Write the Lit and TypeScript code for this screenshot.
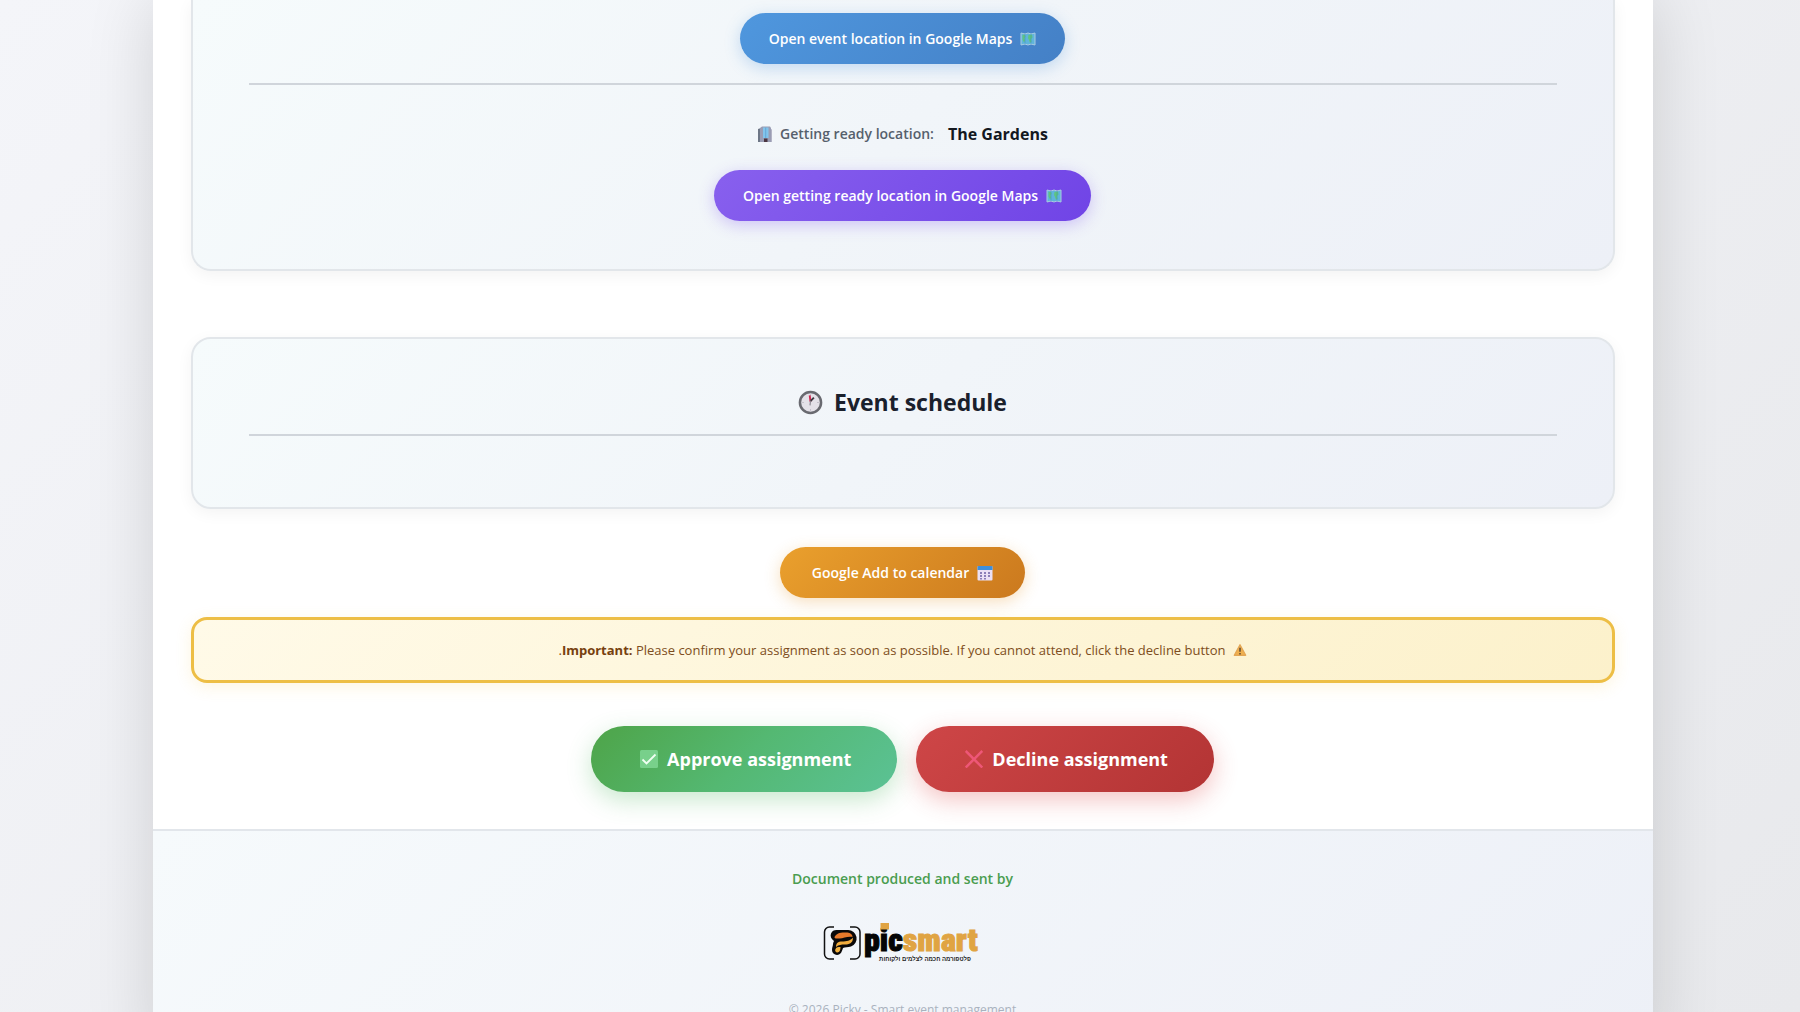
import { LitElement, html, css, svg } from "lit";
import { customElement } from "lit/decorators.js";

const mapIcon = html`<svg class="icon" viewBox="0 0 16 16" aria-hidden="true">
  <path d="M1 2l4 1 3-1 3 1 4-1v12l-4-1-3 1-3-1-4 1z" fill="#5fb4dc" stroke="#a9cbe0" stroke-width="1" />
  <path d="M2.500 4l2-.5 1 2-1 2 .5 2-1 2-1.500-3zM8.500 4l3.500-.5.5 3-1.500 1.500.5 2.500-1.500 1.500-1-3L8 7z" fill="#5fc480" />
  <path d="M5 3v10M11 3v10" stroke="#3f8fb5" stroke-width="0.500" fill="none" />
</svg>`;

const buildingIcon = html`<svg class="icon" viewBox="0 0 16 16" aria-hidden="true">
  <path d="M1 3l3-1v14H1z" fill="#6d7686" />
  <path d="M12 2l3 1.500V16h-3z" fill="#b3b4c6" />
  <path d="M3 2l2-1.500h8L14 2v14H3z" fill="#9a9db4" />
  <path d="M6 1.500h5.500V12H6z" fill="#82c4ec" />
  <path d="M8.700 1.500V12" stroke="#5d9fd0" stroke-width="0.800" />
  <path d="M7 12.500h3.500V16H7z" fill="#4a3540" />
</svg>`;

const clockIcon = html`<svg class="icon clock" viewBox="0 0 26 26" aria-hidden="true">
  <circle cx="13" cy="13" r="11" fill="#e4e1e8" stroke="#696a70" stroke-width="2.600" />
  <path d="M13 4.500v1.500M13 20v1.500M4.500 13H6M20 13h1.500" stroke="#b9b5bf" stroke-width="1" />
  <path d="M13 12L12.200 5.500" stroke="#cf2750" stroke-width="2" />
  <path d="M13 11.500l3.500-3.500" stroke="#3c3940" stroke-width="2" />
  <path d="M13 11l-.500 5" stroke="#8b8790" stroke-width="1.200" />
</svg>`;

const calendarIcon = html`<svg class="icon" viewBox="0 0 16 16" aria-hidden="true">
  <rect x="0.500" y="1" width="15" height="14.500" rx="1" fill="#eadff5" />
  <path d="M0.500 5V2A1 1 0 0 1 1.500 1h13a1 1 0 0 1 1 1v3z" fill="#3d8fdd" />
  <path d="M3 7h2v2H3zM7 7h2v2H7zM11 7h2v2h-2zM3 10h2v2H3zM7 10h2v2H7zM11 10h2v2h-2zM3 13h2v1.500H3zM7 13h2v1.500H7z" fill="#8c7fb8" />
</svg>`;

const warningIcon = html`<svg class="icon small" viewBox="0 0 16 16" aria-hidden="true">
  <path d="M8 2l6.500 12h-13z" fill="#f0b04e" stroke="#e3a654" stroke-width="1.500" stroke-linejoin="round" />
  <path d="M8 5.500v4.500M8 11.500v1.700" stroke="#4a3b2c" stroke-width="1.500" />
</svg>`;

const checkIcon = html`<svg class="icon large" viewBox="0 0 18 18" aria-hidden="true">
  <rect width="18" height="18" rx="1.500" fill="#78d08b" />
  <path d="M2.500 9.500l4 4L15.500 4.500" fill="none" stroke="#f0fff2" stroke-width="1.800" />
</svg>`;

const crossIcon = html`<svg class="icon large" viewBox="0 0 18 18" aria-hidden="true">
  <path d="M0.700 1l16.600 16.500M17.300 1L0.700 17.500" stroke="#ee5777" stroke-width="2.500" fill="none" />
</svg>`;

const logo = html`<svg class="logo" viewBox="0 0 160 42" role="img" aria-label="picsmart">
  ${svg`
  <g fill="none" stroke="#111" stroke-width="1.500">
    <path d="M11 5H6.500A5 5 0 0 0 1.500 10v22a5 5 0 0 0 5 5H11" />
    <path d="M27 5h5a5 5 0 0 1 5 5v22a5 5 0 0 1-5 5h-5" />
  </g>
  <path d="M13.500 8H25a8.500 8.500 0 0 1 3 16.500c-3 1.200-6 .500-8 1.500-1 3-2 7-6 7a5 5 0 0 1-5-5c0-3 1-4 1-6 0-1 .500-2 1-3-3-2-4-5-3-7.500C9 9 11 8 13.500 8z" fill="#0b0909" />
  <path d="M11.500 15c2-4 6-5 13-4.500 3 .200 5 2 5 4.500-5-1-9 1.500-13 1.500-3 0-5 .500-5-1.500z" fill="#e8792a" />
  <path d="M30 15.500c0 6-4 7-8 7-4 .200-6 0-9 2.500 0-4 2-5.500 6-5.500 5-.200 8-.500 11-4z" fill="#f2ad3d" />
  <path d="M12.500 27c1-2 2.500-2 5-2 0 3-1 5.500-3 5.500s-3-2-2-3.500z" fill="#f2b13f" />
  <text class="wordmark" x="41" y="29"><tspan class="pic">pic</tspan><tspan class="smart">smart</tspan></text>
  <path d="M57.500 1h8.500v6.500h-8.500z" fill="#e0a443" />
  <text class="tagline" x="102" y="39" text-anchor="middle">פלטפורמה חכמה לצלמים ולקוחות</text>`}
</svg>`;

@customElement("app-root")
export class AppRoot extends LitElement {
  static styles = css`
    :host {
      display: block;
      height: 100vh;
      overflow: hidden;
      box-sizing: border-box;
      padding-left: 5px;
      background: linear-gradient(135deg, #f4f5f9 0%, #e8e9ec 100%);
      font-family: "Open Sans", "Noto Sans", sans-serif;
      color: #1a202c;
    }
    *, *::before, *::after { box-sizing: border-box; }
    .sheet {
      max-width: 1500px;
      margin: 0 auto;
      background: #fff;
      box-shadow: 0 0 64px rgba(0, 0, 0, 0.14);
    }
    .content {
      display: flex;
      flex-direction: column;
      align-items: center;
      padding: 0 38px 37px;
    }
    .card {
      width: 100%;
      padding: 0 56px;
      display: flex;
      flex-direction: column;
      align-items: center;
      border: 2px solid #e2e6ea;
      border-radius: 20px;
      background: linear-gradient(135deg, #f6fbfc 0%, #f1f5f9 50%, #edf0f7 100%);
      box-shadow: 0 4px 16px rgba(0, 0, 0, 0.05);
    }
    .venue {
      border-top: 0;
      border-top-left-radius: 0;
      border-top-right-radius: 0;
      padding-top: 13px;
      padding-bottom: 48px;
    }
    .schedule {
      margin-top: 66px;
      padding-top: 42px;
      padding-bottom: 71px;
    }
    .rule {
      width: 100%;
      height: 2px;
      margin: 0;
      border: 0;
      background: #d0d5db;
    }
    .venue .rule { margin: 19px 0 33px; }
    .pill {
      display: inline-flex;
      align-items: center;
      justify-content: center;
      gap: 8px;
      height: 51px;
      padding: 1px 29px 0;
      border-radius: 26px;
      color: #fff;
      font-size: 14px;
      line-height: 20px;
      font-weight: 600;
      text-decoration: none;
      white-space: nowrap;
    }
    .blue {
      background: linear-gradient(135deg, #4f97de 0%, #4480c6 100%);
      box-shadow: 0 4px 16px rgba(66, 140, 220, 0.28);
    }
    .purple {
      background: linear-gradient(135deg, #8860ee 0%, #7044e6 100%);
      box-shadow: 0 4px 16px rgba(124, 80, 240, 0.3);
    }
    .orange {
      margin-top: 38px;
      padding: 0 32px;
      background: linear-gradient(135deg, #eaa02d 0%, #cb791e 100%);
      box-shadow: 0 4px 16px rgba(230, 150, 40, 0.3);
    }
    .place {
      display: flex;
      align-items: center;
      margin: 0 0 20px;
      line-height: 32px;
    }
    .place-label {
      margin: 0 14px 0 7px;
      font-size: 14px;
      font-weight: 600;
      color: #56606c;
    }
    .place-name {
      font-size: 16px;
      font-weight: 700;
      color: #13181f;
    }
    .title {
      display: flex;
      align-items: center;
      gap: 11px;
      margin: 0 0 11px;
      font-size: 23px;
      line-height: 42px;
      font-weight: 700;
    }
    .icon {
      flex: none;
      width: 16px;
      height: 16px;
    }
    .icon.clock { width: 25px; height: 25px; }
    .icon.small { width: 14px; height: 14px; }
    .icon.large { width: 18px; height: 18px; }
    .notice {
      display: flex;
      align-items: center;
      justify-content: center;
      gap: 7px;
      width: 100%;
      margin: 19px 0 0;
      padding: 17px 24px;
      border: 3px solid #edbe45;
      border-radius: 16px;
      background: linear-gradient(135deg, #fffae8 0%, #fcf1cb 100%);
      box-shadow: 0 4px 16px rgba(240, 190, 60, 0.16);
      font-size: 13px;
      line-height: 26px;
      color: #7d4d20;
    }
    .notice strong { font-weight: 700; color: #76400f; }
    .actions {
      display: flex;
      justify-content: center;
      gap: 19px;
      margin-top: 43px;
    }
    .action {
      display: inline-flex;
      align-items: center;
      gap: 9px;
      height: 66px;
      padding: 0 46px 0 49px;
      border: 0;
      border-radius: 33px;
      color: #fff;
      font-family: inherit;
      font-size: 18px;
      font-weight: 700;
      white-space: nowrap;
      cursor: pointer;
    }
    .approve {
      background: linear-gradient(135deg, #4ea448 0%, #54b872 50%, #5bc295 100%);
      box-shadow: 0 8px 24px rgba(72, 180, 90, 0.3);
    }
    .decline {
      background: linear-gradient(135deg, #ce4647 0%, #b33434 100%);
      box-shadow: 0 8px 24px rgba(220, 60, 60, 0.3);
    }
    .footer {
      display: flex;
      flex-direction: column;
      align-items: center;
      padding: 36px 38px;
      border-top: 2px solid #e2e6eb;
      background: linear-gradient(135deg, #f6fafc 0%, #edf0f7 100%);
    }
    .credit {
      margin: 0 0 31px;
      font-size: 14px;
      line-height: 24px;
      font-weight: 600;
      color: #4a9d50;
    }
    .logo {
      display: block;
      width: 160px;
      height: 42px;
      overflow: visible;
    }
    .wordmark {
      font-family: Impact, "Roboto Condensed", "Open Sans Condensed", "Noto Sans Condensed", "Liberation Sans Narrow", "Liberation Sans", sans-serif;
      font-size: 32px;
      font-weight: 900;
      stroke-width: 1px;
    }
    .pic { fill: #050505; stroke: #050505; }
    .smart { fill: #e0a443; stroke: #e0a443; }
    .tagline {
      font-family: "Liberation Sans", sans-serif;
      font-size: 6px;
      font-weight: 700;
      fill: #222;
    }
    .copyright {
      margin: 36px 0 0;
      font-size: 12px;
      line-height: 20px;
      color: #a9b2be;
    }
  `;

  render() {
    return html`
      <div class="sheet">
        <main class="content">
          <section class="card venue">
            <a class="pill blue" href="#event-location">Open event location in Google Maps ${mapIcon}</a>
            <hr class="rule" />
            <p class="place">
              ${buildingIcon}
              <span class="place-label">Getting ready location:</span>
              <span class="place-name">The Gardens</span>
            </p>
            <a class="pill purple" href="#ready-location">Open getting ready location in Google Maps ${mapIcon}</a>
          </section>
          <section class="card schedule">
            <h2 class="title">${clockIcon}<span>Event schedule</span></h2>
            <hr class="rule" />
          </section>
          <a class="pill orange" href="#calendar">Google Add to calendar ${calendarIcon}</a>
          <p class="notice">
            <span>.<strong>Important:</strong> Please confirm your assignment as soon as possible. If you cannot attend, click the decline button</span>
            ${warningIcon}
          </p>
          <div class="actions">
            <button class="action approve" type="button">${checkIcon}Approve assignment</button>
            <button class="action decline" type="button">${crossIcon}Decline assignment</button>
          </div>
        </main>
        <footer class="footer">
          <p class="credit">Document produced and sent by</p>
          ${logo}
          <p class="copyright">© 2026 Picky - Smart event management</p>
        </footer>
      </div>
    `;
  }
}
